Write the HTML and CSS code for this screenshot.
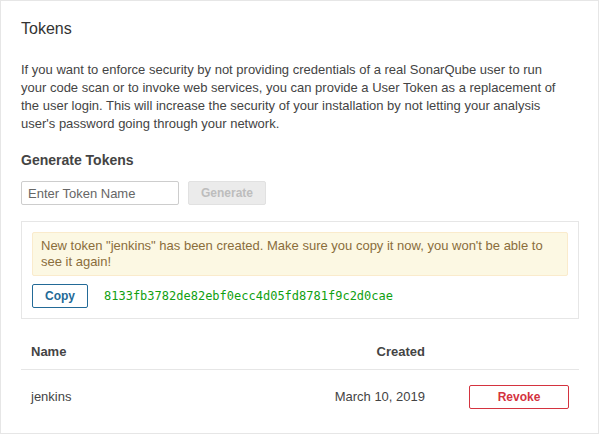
FILE: index.html
```html
<!DOCTYPE html>
<html lang="en">
<head>
<meta charset="utf-8">
<title>Tokens</title>
<link rel="stylesheet" href="styles.css">
</head>
<body>
<div class="panel">
  <h2 class="title">Tokens</h2>
  <p class="intro">If you want to enforce security by not providing credentials of a real SonarQube user to run your code scan or to invoke web services, you can provide a User Token as a replacement of the user login. This will increase the security of your installation by not letting your analysis user's password going through your network.</p>
  <h3 class="subtitle">Generate Tokens</h3>
  <form class="gen-form">
    <input class="input" type="text" placeholder="Enter Token Name">
    <button class="btn btn-disabled" type="button" disabled>Generate</button>
  </form>
  <div class="token-box">
    <div class="alert">New token "jenkins" has been created. Make sure you copy it now, you won't be able to see it again!</div>
    <div class="token-row">
      <button class="btn btn-primary" type="button">Copy</button>
      <code class="token">8133fb3782de82ebf0ecc4d05fd8781f9c2d0cae</code>
    </div>
  </div>
  <div class="table">
    <div class="cell head">Name</div>
    <div class="cell head right">Created</div>
    <div class="cell head"></div>
    <div class="cell">jenkins</div>
    <div class="cell right">March 10, 2019</div>
    <div class="cell right"><button class="btn btn-danger" type="button">Revoke</button></div>
  </div>
</div>
</body>
</html>
```

FILE: styles.css
```css
html, body {
  margin: 0;
  padding: 0;
  background: #fff;
}
body {
  font-family: "Liberation Sans", Arial, sans-serif;
  font-size: 13px;
  line-height: 16px;
  color: #444;
}
.panel {
  box-sizing: border-box;
  width: 599px;
  border: 1px solid #e6e6e6;
  padding: 20px 19px 9px 20px;
}
.title {
  margin: 0;
  font-size: 16px;
  line-height: 16px;
  font-weight: 400;
  color: #333;
}
.intro {
  margin: 24px 0 0 0;
  max-width: 541px;
  line-height: 18px;
}
.subtitle {
  margin: 19px 0 0 0;
  font-size: 14px;
  line-height: 16px;
  font-weight: 700;
  color: #444;
}
.gen-form {
  margin: 13px 0 0 0;
  display: flex;
  gap: 9px;
}
.input {
  box-sizing: border-box;
  width: 158px;
  height: 24px;
  margin: 0;
  padding: 0 6px;
  border: 1px solid #cdcdcd;
  border-radius: 2px;
  font-family: "Liberation Sans", Arial, sans-serif;
  font-size: 13px;
  color: #444;
  outline: none;
}
.input::placeholder {
  color: #666;
  opacity: 1;
}
.btn {
  box-sizing: border-box;
  height: 24px;
  margin: 0;
  padding: 0 12px;
  border: 1px solid #236a97;
  border-radius: 2px;
  background: #fff;
  font-family: "Liberation Sans", Arial, sans-serif;
  font-size: 12px;
  font-weight: 700;
  line-height: 22px;
  color: #236a97;
  cursor: pointer;
}
.btn-disabled {
  background: #ebebeb;
  border-color: #e1e1e1;
  color: #bdbdbd;
  cursor: default;
}
.btn-danger {
  width: 100px;
  border-color: #d4333f;
  color: #d4333f;
}
.token-box {
  margin-top: 16px;
  border: 1px solid #e6e6e6;
  padding: 10px;
}
.alert {
  border: 1px solid #faebcc;
  border-radius: 2px;
  background: #fcf8e3;
  color: #8a6d3b;
  padding: 5px 8px;
}
.token-row {
  margin-top: 8px;
  display: flex;
  align-items: center;
  gap: 16px;
}
.token {
  font-family: "DejaVu Sans Mono", "Liberation Mono", monospace;
  font-size: 12px;
  color: #10a010;
}
.table {
  margin-top: 16px;
  display: grid;
  grid-template-columns: 1fr auto 144px;
}
.cell {
  display: flex;
  align-items: center;
  padding: 15px 10px;
  min-height: 24px;
}
.cell.head {
  padding: 9px 10px;
  min-height: 16px;
  font-weight: 700;
  border-bottom: 1px solid #e6e6e6;
}
.cell.right {
  justify-content: flex-end;
}
```
